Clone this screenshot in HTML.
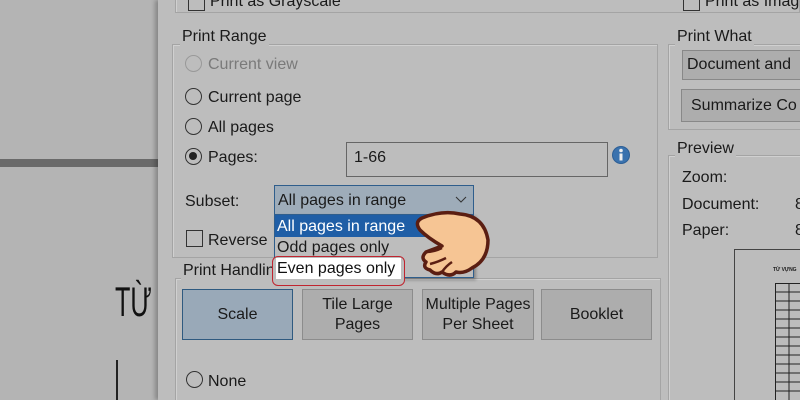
<!DOCTYPE html>
<html style="width:800px;height:400px;overflow:hidden"><head><meta charset="utf-8"><style>
*{margin:0;padding:0;box-sizing:border-box}
body{width:800px;height:400px;overflow:hidden;background:#b4b4b4;position:relative;font-family:"Liberation Sans",sans-serif;font-size:16px;color:#1a1a1a}
.a{position:absolute;white-space:nowrap}
.t{position:absolute;white-space:nowrap;margin-top:2px}
.dlg{position:absolute;left:158px;top:0;width:642px;height:400px;background:#bdbdbd;box-shadow:-3px 0 4px rgba(0,0,0,.25)}
.grp{position:absolute;border:1px solid #a4a4a4;box-shadow:1px 1px 0 #d0d0d0 inset}
.ttl{position:absolute;background:#bdbdbd;padding:0 2px;line-height:18px;margin-top:2px}
.rad{position:absolute;width:17px;height:17px;border:1.5px solid #333;border-radius:50%}
.chk{position:absolute;width:17px;height:17px;border:1.5px solid #333}
.btn{position:absolute;background:#adadad;border:1px solid #8c8c8c;text-align:center;display:flex;align-items:center;justify-content:center;line-height:20px}
</style></head><body>
<div class="a" style="left:0;top:159px;width:160px;height:8px;background:#6a6a6a"></div>
<div class="a" style="left:115px;top:278px;font-size:42px;transform:scaleX(.6);transform-origin:left;color:#111">TỪ V</div>
<div class="a" style="left:116px;top:360px;width:1.5px;height:40px;background:#222"></div>

<div class="dlg"></div>
<div class="grp" style="left:175px;top:-10px;width:625px;height:23px;border-top:none"></div>
<div class="chk" style="left:188px;top:-6px"></div>
<div class="t" style="left:210px;top:-9px">Print as Grayscale</div>
<div class="chk" style="left:683px;top:-6px"></div>
<div class="t" style="left:705px;top:-9px">Print as Image</div>

<div class="grp" style="left:172px;top:44px;width:486px;height:214px"></div>
<div class="ttl" style="left:180px;top:26px">Print Range</div>
<div class="rad" style="left:185px;top:55px;border-color:#999"></div>
<div class="t" style="left:208px;top:54px;color:#7a7a7a">Current view</div>
<div class="rad" style="left:185px;top:88px"></div>
<div class="t" style="left:208px;top:87px">Current page</div>
<div class="rad" style="left:185px;top:118px"></div>
<div class="t" style="left:208px;top:117px">All pages</div>
<div class="rad" style="left:185px;top:148px"><div style="position:absolute;left:3px;top:3px;width:8px;height:8px;border-radius:50%;background:#222"></div></div>
<div class="t" style="left:208px;top:147px">Pages:</div>
<div class="a" style="left:346px;top:142px;width:262px;height:35px;border:1.5px solid #666;background:#bdbdbd"></div>
<div class="t" style="left:354px;top:147px">1-66</div>
<svg class="a" style="left:611px;top:145px" width="20" height="20"><circle cx="10" cy="10" r="9" fill="#2c5e95"/><circle cx="10" cy="10" r="8" fill="#3a72ae"/><circle cx="10" cy="5.5" r="1.8" fill="#eee"/><rect x="8.5" y="8.5" width="3" height="7" fill="#eee"/></svg>
<div class="t" style="left:185px;top:191px">Subset:</div>
<div class="a" style="left:274px;top:185px;width:200px;height:30px;background:#9eacb9;border:1.5px solid #2f5e8c"></div>
<div class="t" style="left:278px;top:190px">All pages in range</div>
<svg class="a" style="left:455px;top:196px" width="12" height="8"><path d="M1 1L6 6L11 1" stroke="#333" fill="none"/></svg>
<div class="chk" style="left:186px;top:230px"></div>
<div class="t" style="left:208px;top:230px">Reverse</div>

<div class="grp" style="left:175px;top:278px;width:486px;height:130px"></div>
<div class="ttl" style="left:181px;top:260px">Print Handling</div>
<div class="btn" style="left:182px;top:289px;width:111px;height:51px;background:#99a9b8;border:1.5px solid #2f5a80">Scale</div>
<div class="btn" style="left:302px;top:289px;width:111px;height:51px">Tile Large<br>Pages</div>
<div class="btn" style="left:422px;top:289px;width:112px;height:51px">Multiple Pages<br>Per Sheet</div>
<div class="btn" style="left:541px;top:289px;width:111px;height:51px">Booklet</div>
<div class="rad" style="left:186px;top:371px"></div>
<div class="t" style="left:208px;top:371px">None</div>

<div class="a" style="left:274px;top:214px;width:200px;height:64px;background:#bdbdbd;border:1px solid #2f5e8c;box-shadow:2px 2px 3px rgba(0,0,0,.3)"></div>
<div class="a" style="left:275px;top:215px;width:198px;height:22px;background:#1f5ea6"></div>
<div class="t" style="left:277px;top:216px;color:#fff">All pages in range</div>
<div class="t" style="left:277px;top:237px">Odd pages only</div>
<div class="a" style="left:272px;top:256px;width:133px;height:30px;border:1.5px solid #c0242f;border-radius:6px;background:#bdbdbd"></div>
<div class="a" style="left:276px;top:258px;width:125px;height:21px;background:#fff"></div>
<div class="t" style="left:277px;top:258px;color:#111">Even pages only</div>

<div class="grp" style="left:668px;top:44px;width:140px;height:86px"></div>
<div class="ttl" style="left:675px;top:26px">Print What</div>
<div class="btn" style="left:682px;top:50px;width:130px;height:30px;justify-content:flex-start;padding-left:4px;border-color:#888">Document and</div>
<div class="btn" style="left:681px;top:89px;width:130px;height:33px;justify-content:flex-start;padding-left:9px;border-color:#888">Summarize Co</div>
<div class="grp" style="left:668px;top:155px;width:140px;height:260px"></div>
<div class="ttl" style="left:675px;top:138px">Preview</div>
<div class="t" style="left:682px;top:167px">Zoom:</div>
<div class="t" style="left:682px;top:194px">Document:</div>
<div class="t" style="left:682px;top:220px">Paper:</div>
<div class="t" style="left:795px;top:194px">8</div>
<div class="t" style="left:795px;top:220px">8</div>
<div class="a" style="left:734px;top:249px;width:70px;height:160px;border:1.5px solid #444;background:#bcbcbc"></div>
<div class="a" style="left:773px;top:267px;font-size:5px;font-weight:bold">TỪ VỰNG</div>
<svg class="a" style="left:775px;top:283px" width="25" height="117"><g stroke="#222" stroke-width="1" fill="none"><rect x="0.5" y="0.5" width="30" height="120"/><line x1="14" y1="0" x2="14" y2="120"/>
<path d="M0 9H30M0 18H30M0 27H30M0 36H30M0 45H30M0 54H30M0 63H30M0 72H30M0 81H30M0 90H30M0 99H30M0 108H30"/></g></svg>

<svg class="a" style="left:412px;top:208px" width="80" height="75">
<g fill="#f6c594" stroke="#5b1e12" stroke-width="3.5" stroke-linejoin="round">
<path d="M10 10 Q30 2 48 6 Q72 8 76 32 Q76 52 60 60 Q52 66 44 64 Q38 70 30 64 Q24 68 18 62 Q10 60 14 54 Q8 50 14 44 L30 38 Q16 30 8 22 Q2 14 10 10Z"/>
<path d="M14 44 Q22 44 30 40 M18 56 Q26 54 34 50 M30 64 Q34 58 40 54" fill="none" stroke-width="2.5"/>
</g></svg>
</body></html>
